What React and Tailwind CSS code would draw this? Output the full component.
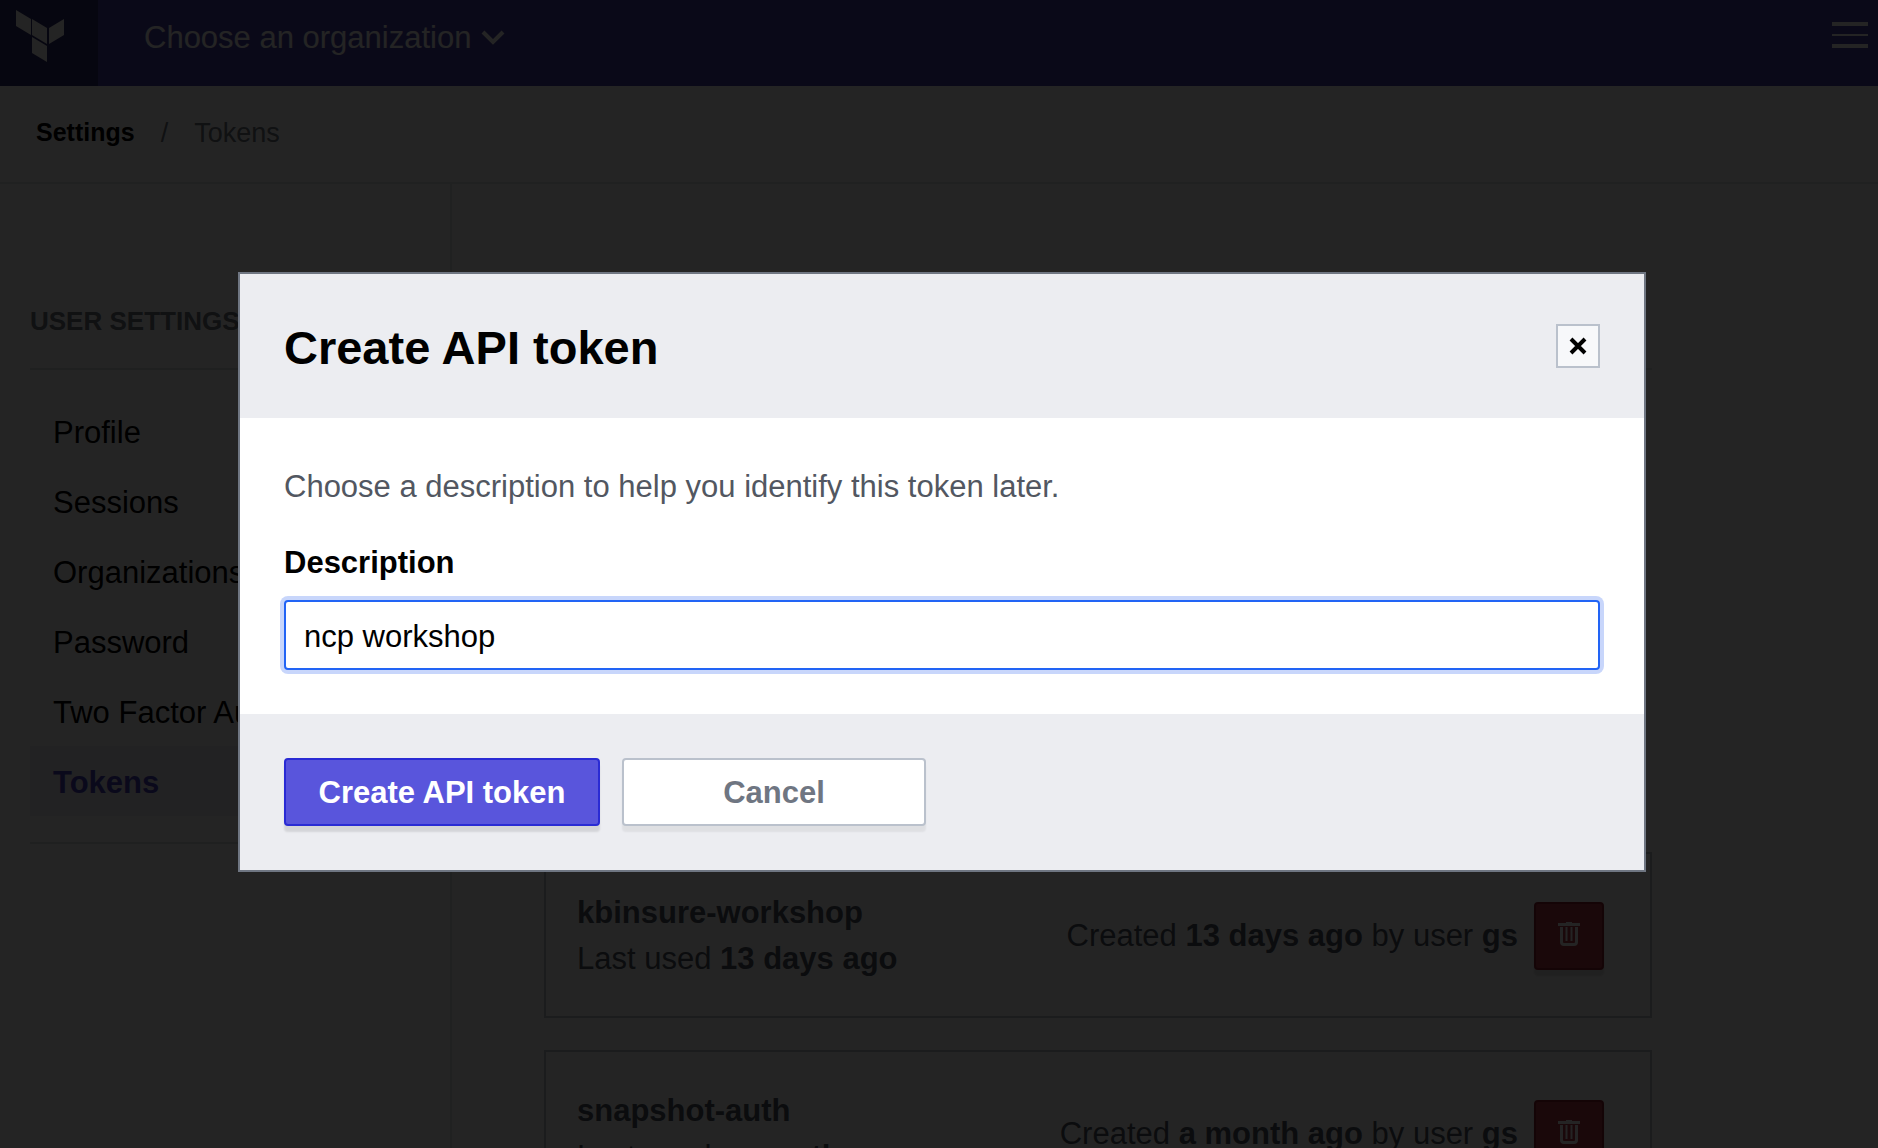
import React, { useState } from "react";

const navItems = ["Profile", "Sessions", "Organizations", "Password", "Two Factor Authentication", "Tokens"];

const tokens = [
  { name: "kbinsure-workshop", used: "13 days ago", created: "13 days ago" },
  { name: "snapshot-auth", used: "a month ago", created: "a month ago" },
];

function TerraformLogo() {
  return (
    <svg viewBox="0 0 48 52" className="h-[52px] w-12" fill="#fff" aria-hidden="true">
      <path d="M0 0l15 9v16L0 16z" />
      <path d="M16 9l15 9v16l-15-9z" />
      <path d="M33 18l15-9v16l-15 9z" />
      <path d="M16 27l15 9v16l-15-9z" />
    </svg>
  );
}

function ChevronIcon() {
  return (
    <svg viewBox="0 0 24 16" className="h-4 w-6" fill="none" stroke="#fff" strokeWidth="4" aria-hidden="true">
      <path d="M2 2l10 10L22 2" />
    </svg>
  );
}

function MenuIcon() {
  return (
    <svg viewBox="0 0 36 26" className="h-[26px] w-9" fill="#fff" aria-hidden="true">
      <path d="M0 0h36v4H0zM0 12h36v2H0zM0 22h36v4H0z" />
    </svg>
  );
}

function CloseIcon() {
  return (
    <svg viewBox="0 0 18 18" className="size-[18px]" fill="none" stroke="#000" strokeWidth="4" aria-hidden="true">
      <path d="M2 2l14 14M16 2L2 16" />
    </svg>
  );
}

function TrashIcon() {
  return (
    <svg viewBox="0 0 24 24" className="size-6" fill="none" stroke="#fff" aria-hidden="true">
      <path d="M1 2.500h22" strokeWidth="3" />
      <path d="M9 1h6" strokeWidth="2" />
      <path d="M4.500 5v15q0 2.500 2.500 2.500h10q2.500 0 2.500-2.500V5" strokeWidth="3" />
      <path d="M9.500 5v14M14.500 5v14" strokeWidth="2" />
    </svg>
  );
}

function TokenCard({ token }) {
  return (
    <li className="flex items-center justify-between border-2 border-[#c0c4ca] pt-9 pr-[46px] pb-[34px] pl-[31px] text-[31px] leading-[46px] text-[#525761]">
      <div>
        <h3 className="font-bold">{token.name}</h3>
        <p>
          Last used <strong>{token.used}</strong>
        </p>
      </div>
      <div className="flex items-center gap-4">
        <p>
          Created <strong>{token.created}</strong> by user <strong>gs</strong>
        </p>
        <button
          type="button"
          aria-label={"Delete " + token.name}
          className="flex h-[68px] w-[70px] items-center justify-center rounded border-2 border-[#8e1f2c] bg-[#ba3947] pb-1 shadow-[0_6px_2px_rgba(0,0,0,0.12)]"
        >
          <TrashIcon />
        </button>
      </div>
    </li>
  );
}

function TokenDialog() {
  const [description, setDescription] = useState("ncp workshop");
  return (
    <div className="fixed inset-0 flex items-start justify-center bg-black/86 pt-[272px] pl-[6px]">
      <form
        role="dialog"
        aria-modal="true"
        aria-labelledby="dialog-title"
        onSubmit={(e) => e.preventDefault()}
        className="w-full max-w-[1408px] border-2 border-[#6f7682] bg-white text-[31px] leading-[46px]"
      >
        <header className="flex items-center justify-between bg-[#ecedf1] px-11 py-11">
          <h2 id="dialog-title" className="pt-1 text-[47px] leading-[52px] font-bold">
            Create API token
          </h2>
          <button
            type="button"
            aria-label="Close"
            className="flex size-11 items-center justify-center border-2 border-[#bac1cc] bg-[#f7f8fa]"
          >
            <CloseIcon />
          </button>
        </header>
        <div className="flex flex-col px-11 pt-[46px] pb-11">
          <p className="text-[#525761]">Choose a description to help you identify this token later.</p>
          <label htmlFor="description" className="mt-[30px] mb-[14px] font-bold">
            Description
          </label>
          <input
            id="description"
            type="text"
            value={description}
            onChange={(e) => setDescription(e.target.value)}
            className="h-[70px] w-full rounded border-2 border-[#2264f5] bg-white px-[18px] pt-[3px] ring-4 ring-[#c8d6fb] outline-none"
          />
        </div>
        <footer className="flex gap-[22px] bg-[#ecedf1] p-11 font-bold">
          <button
            type="submit"
            className="h-[68px] w-[316px] rounded border-2 border-[#2a2bd4] bg-[#5955dc] pt-[2px] text-white shadow-[0_6px_2px_rgba(0,0,0,0.1)]"
          >
            Create API token
          </button>
          <button
            type="button"
            className="h-[68px] w-[304px] rounded border-2 border-[#bac1cc] bg-white pt-[2px] text-[#6f7682] shadow-[0_6px_2px_rgba(0,0,0,0.06)]"
          >
            Cancel
          </button>
        </footer>
      </form>
    </div>
  );
}

export default function App() {
  return (
    <div className="flex h-screen flex-col overflow-hidden bg-white font-['Liberation_Sans',Arial,sans-serif] text-black">
      <header className="flex h-[86px] shrink-0 items-start bg-[#4b44a8] pr-[10px]">
        <a href="#home" aria-label="Terraform" className="flex h-full w-[98px] items-start bg-[#2e2a70] pt-[10px] pl-4">
          <TerraformLogo />
        </a>
        <button type="button" className="mt-[15px] ml-[46px] flex items-center gap-[10px] text-[31px] leading-[46px] text-white">
          Choose an organization
          <ChevronIcon />
        </button>
        <button type="button" aria-label="Menu" className="mt-[22px] ml-auto">
          <MenuIcon />
        </button>
      </header>

      <nav aria-label="Breadcrumb" className="flex h-[98px] shrink-0 items-center gap-[26px] border-b-2 border-[#e4e5e8] px-9 pb-[2px] text-[27px]">
        <a href="#settings" className="text-[25px] font-bold">
          Settings
        </a>
        <span className="text-[#6f7682]">/</span>
        <span className="text-[#6f7682]">Tokens</span>
      </nav>

      <div className="flex min-h-0 grow">
        <aside className="w-[452px] shrink-0 border-r-2 border-[#e4e5e8] px-[30px] pt-[116px]">
          <h2 className="h-[70px] border-b-2 border-[#dcdee2] text-[26px] leading-[42px] font-bold text-[#6f7682]">USER SETTINGS</h2>
          <ul className="border-b-2 border-[#dcdee2] py-[26px] text-[31px] leading-[66px]">
            {navItems.map((item) => (
              <li key={item}>
                <a
                  href="#nav"
                  className={
                    item === "Tokens"
                      ? "block bg-[#eeeef8] px-[23px] pt-1 font-bold text-[#4b44c0]"
                      : "block truncate px-[23px] pt-1"
                  }
                >
                  {item}
                </a>
              </li>
            ))}
          </ul>
        </aside>
        <main className="grow pt-[184px] pl-[92px]">
          <ul className="flex max-w-[1108px] flex-col gap-8 border-t-2 border-[#e4e5e8] pt-[482px]">
            {tokens.map((token) => (
              <TokenCard key={token.name} token={token} />
            ))}
          </ul>
        </main>
      </div>

      <TokenDialog />
    </div>
  );
}
